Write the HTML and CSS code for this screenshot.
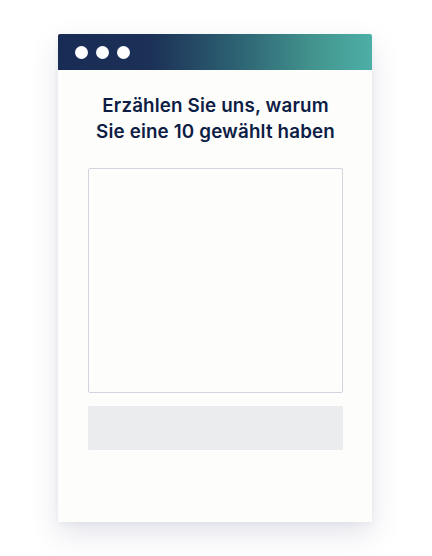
FILE: index.html
```html
<!DOCTYPE html>
<html lang="de">
<head>
<meta charset="utf-8">
<link rel="stylesheet" href="styles.css">
</head>
<body>
<div class="window">
  <div class="titlebar">
    <span class="dot"></span><span class="dot"></span><span class="dot"></span>
  </div>
  <div class="content">
    <h1 class="title">Erzählen Sie uns, warum<br>Sie eine 10 gewählt haben</h1>
    <div class="field"></div>
    <div class="button"></div>
  </div>
</div>
</body>
</html>
```
FILE: styles.css
```css
html, body {
  margin: 0;
  padding: 0;
  background: #ffffff;
}
body {
  width: 432px;
  height: 556px;
  padding-top: 34px;
  box-sizing: border-box;
  font-family: "Inter", "Open Sans", sans-serif;
}
.window {
  margin-left: 58px;
  width: 314px;
  height: 488px;
  background: #fdfdfb;
  box-shadow: 0 12px 28px rgba(40, 50, 90, 0.13), 0 2px 6px rgba(40, 50, 90, 0.05);
  display: flex;
  flex-direction: column;
}
.titlebar {
  height: 36px;
  background: linear-gradient(90deg, #182b55 0%, #1c3157 30%, #2f6876 60%, #43958f 82%, #4cafa6 100%);
  display: flex;
  align-items: center;
  gap: 8px;
  padding-left: 17px;
  border-radius: 2px 2px 0 0;
}
.dot {
  width: 13px;
  height: 13px;
  border-radius: 50%;
  background: #ffffff;
}
.content {
  padding: 23px 29px 0 30px;
  display: flex;
  flex-direction: column;
}
.title {
  margin: 0;
  text-align: center;
  font-size: 18.8px;
  font-weight: 600;
  line-height: 26px;
  color: #0e1d45;
  letter-spacing: 0.15px;
}
.field {
  margin-top: 23px;
  height: 223px;
  border: 1px solid #d3d3de;
  border-radius: 2px;
  background: #fdfdfb;
}
.button {
  margin-top: 13px;
  height: 44px;
  background: #ebecee;
  border-radius: 1px;
}
```
